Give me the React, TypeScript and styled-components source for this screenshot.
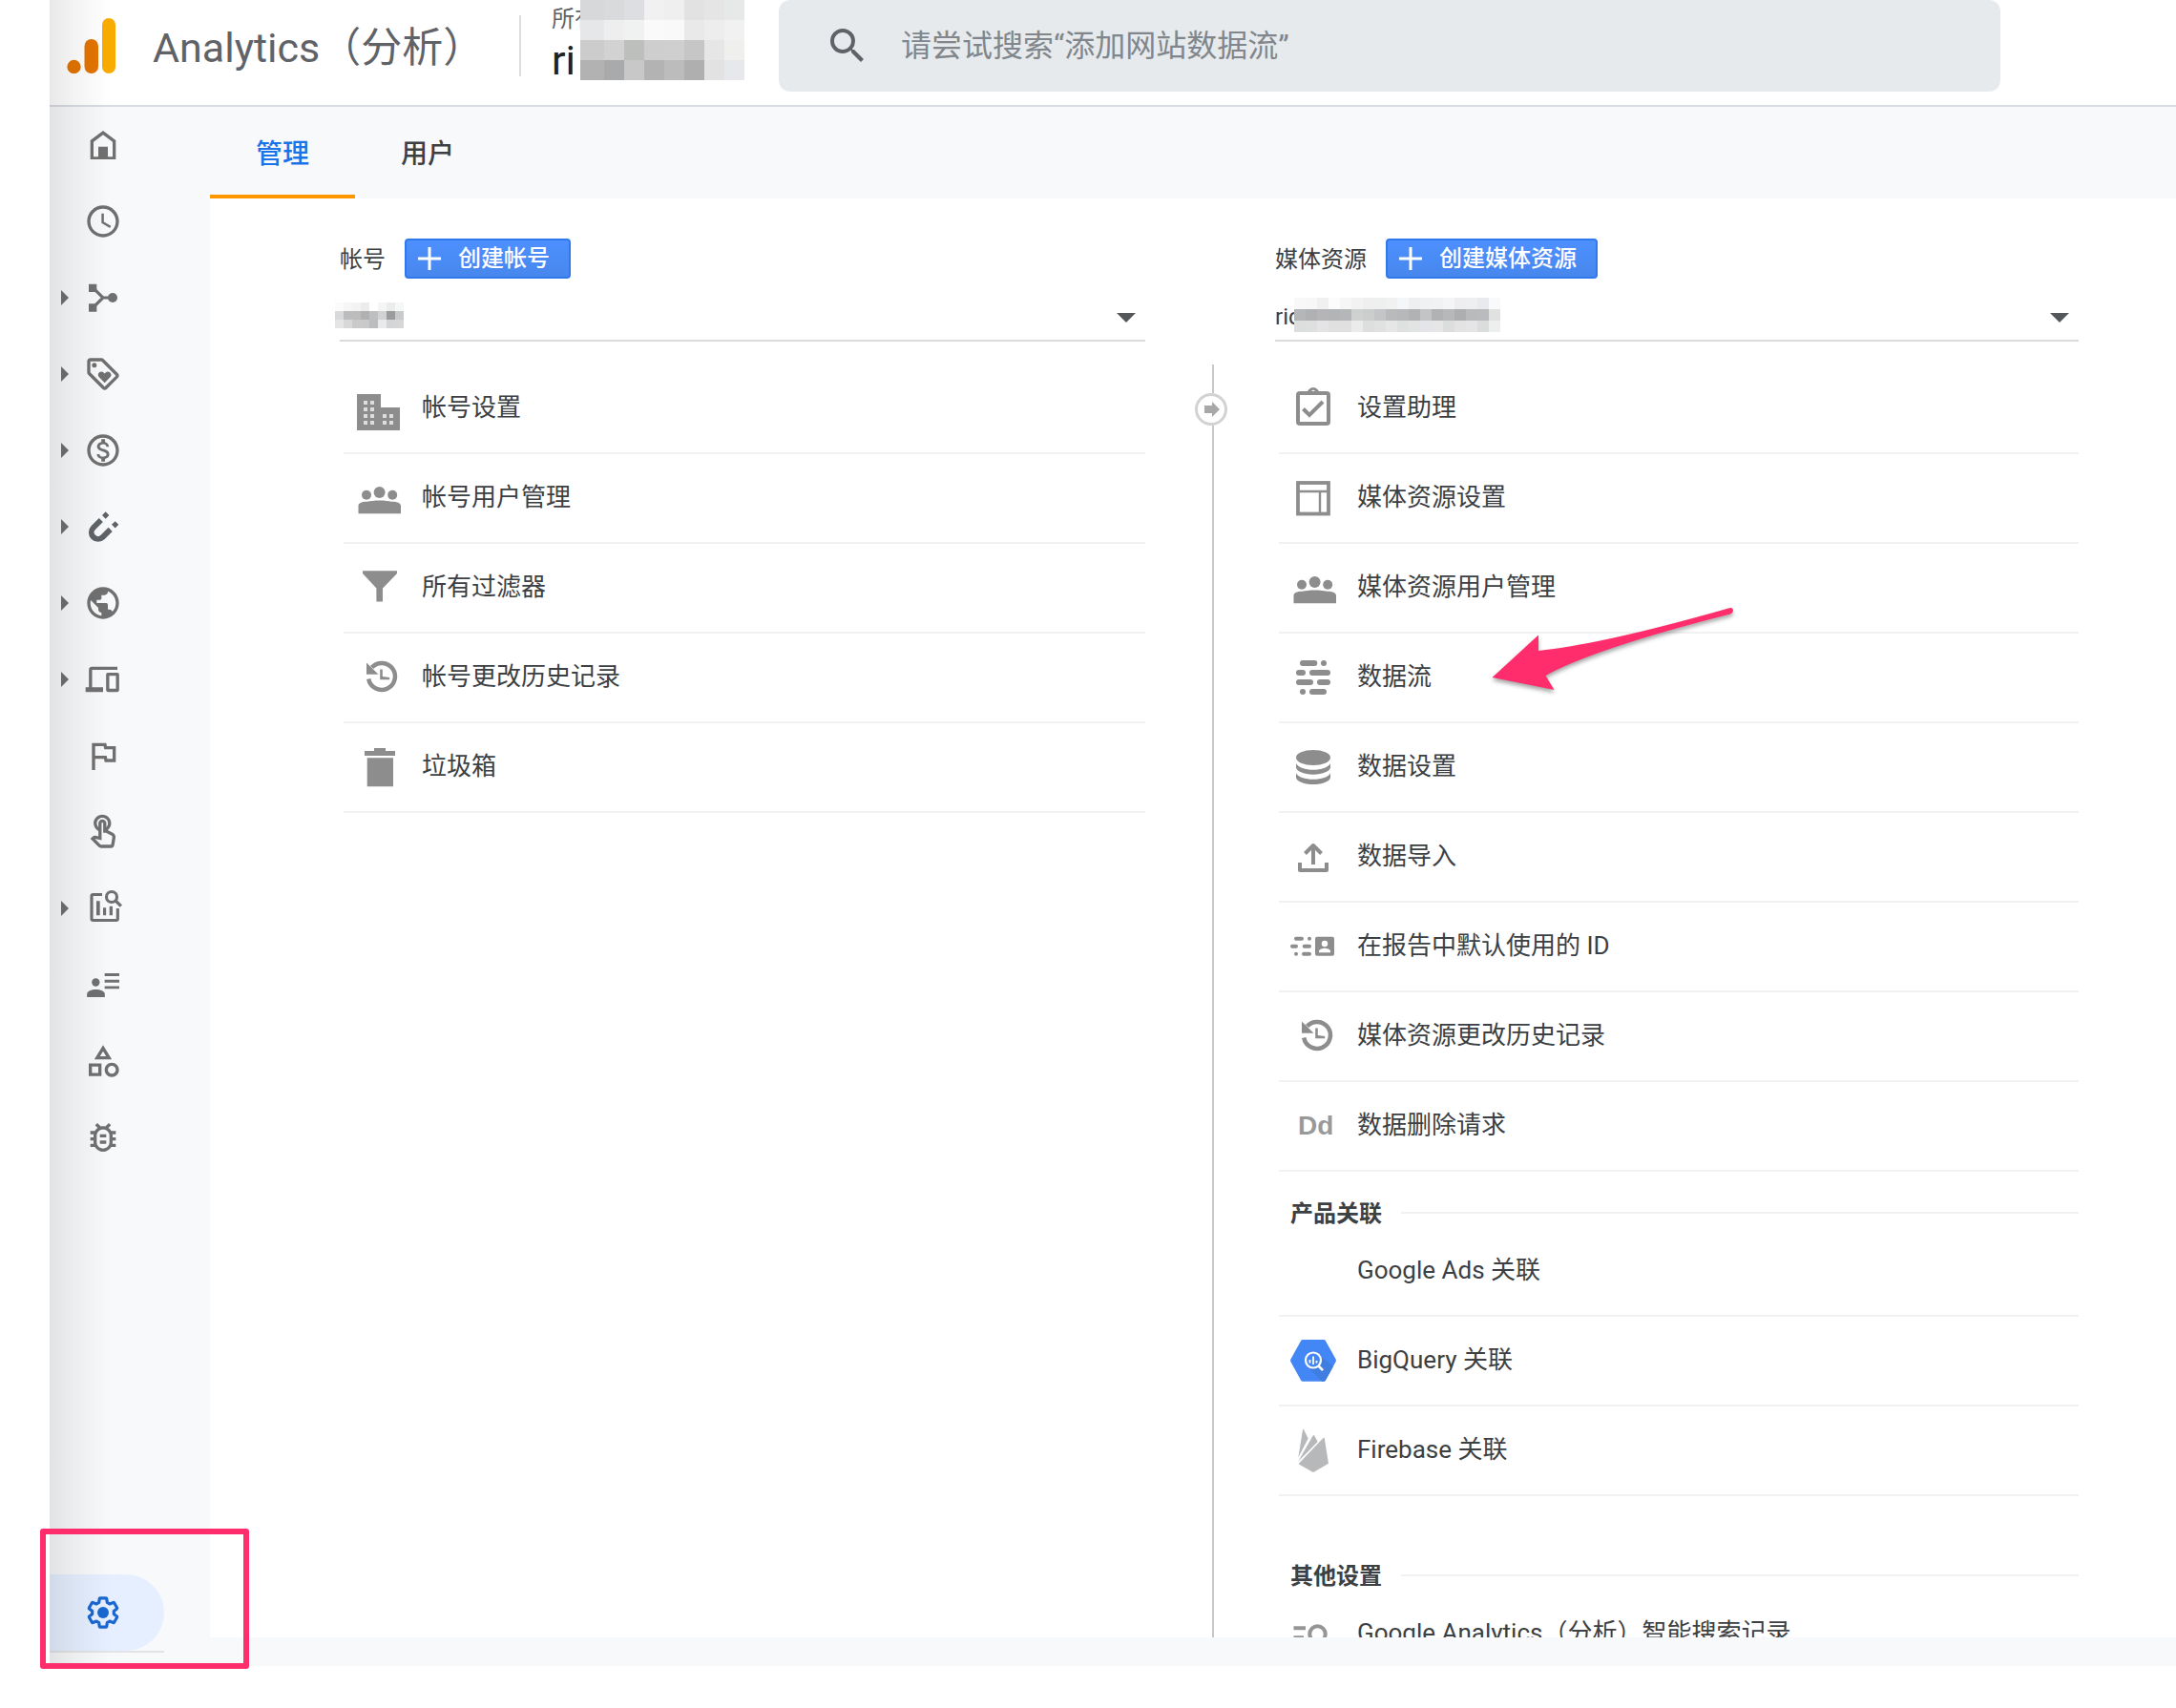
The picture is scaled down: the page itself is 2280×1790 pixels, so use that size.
import React from "react";
import styled, { createGlobalStyle } from "styled-components";
import {
  MdSchedule,
  MdOutlineLoyalty,
  MdOutlineMonetizationOn,
  MdPublic,
  MdOutlineFlag,
  MdOutlineTouchApp,
  MdOutlineCategory,
  MdOutlineBugReport,
  MdSearch,
} from "react-icons/md";

const color = {
  text: "#3c4043",
  muted: "#5f6368",
  nav: "#707070",
  icon: "#8d8d8d",
  surface: "#f8f9fb",
  rule: "#f1f1f1",
  accent: "#ff2d6b",
};

const GlobalStyle = createGlobalStyle`
  *, *::before, *::after { box-sizing: border-box; }
  body {
    margin: 0;
    background: #fff;
    color: ${color.text};
    font-family: Roboto, "Noto Sans CJK SC", sans-serif;
    font-size: 24px;
  }
  button, input, select { font-family: inherit; }
`;

const Page = styled.div`
  height: 100vh;
  padding: 0 0 44px 52px;
`;

const Frame = styled.div`
  position: relative;
  display: flex;
  flex-direction: column;
  height: 100%;
  background: ${color.surface};
`;

/* Soft shade along the left edge of the app */
const EdgeShade = styled.div`
  position: absolute;
  inset: 0 auto 0 0;
  width: 64px;
  background: linear-gradient(to right, rgba(0, 0, 0, 0.09), rgba(0, 0, 0, 0.05) 35%, rgba(0, 0, 0, 0));
  pointer-events: none;
`;

const Header = styled.header`
  flex: none;
  height: 112px;
  padding-left: 18px;
  border-bottom: 2px solid #d9dce1;
  background: #fff;
`;

const HeaderRow = styled.div`
  display: flex;
  align-items: center;
  height: 96px;
`;

const Title = styled.h1`
  flex: none;
  min-width: 384px;
  margin: 0 0 0 38px;
  padding-top: 4px;
  color: ${color.muted};
  font-size: 43px;
  font-weight: 400;
  line-height: 56px;
  white-space: nowrap;
`;

const HeaderRule = styled.div`
  flex: none;
  width: 2px;
  height: 64px;
  background: #dadce0;
`;

const AccountPicker = styled.button`
  position: relative;
  align-self: flex-start;
  flex: none;
  width: 238px;
  margin-left: 32px;
  padding: 6px 0 0;
  border: 0;
  background: none;
  text-align: left;
`;

const PickerScope = styled.span`
  display: block;
  color: ${color.muted};
  font-size: 24px;
  line-height: 28px;
`;

const PickerName = styled.span`
  display: block;
  color: #202124;
  font-size: 43px;
  line-height: 58px;
`;

const Mosaic = styled.span<{ $x: number; $y: number; $cell: number; $cols: number; $lead: number }>`
  position: absolute;
  left: ${(p) => p.$x}px;
  top: ${(p) => p.$y}px;
  display: grid;
  grid-template-columns: ${(p) => p.$cell + p.$lead}px repeat(${(p) => p.$cols - 1}, ${(p) => p.$cell}px);
  grid-auto-rows: ${(p) => p.$cell}px;
  pointer-events: none;
`;

const Cell = styled.span<{ $tone: string }>`
  background: #${(p) => p.$tone};
`;

const SearchBox = styled.label`
  display: flex;
  flex: 1;
  align-items: center;
  gap: 32px;
  height: 96px;
  margin-right: 184px;
  padding-left: 48px;
  border-radius: 12px;
  background: #e6eaec;
  color: ${color.muted};
`;

const SearchInput = styled.input`
  flex: 1;
  min-width: 0;
  padding: 0;
  border: 0;
  outline: 0;
  background: none;
  color: ${color.text};
  font-size: 32px;
  line-height: 48px;
  &::placeholder { color: #80868b; opacity: 1; }
`;

const Body = styled.div`
  display: flex;
  flex: 1;
  min-height: 0;
`;

const Sidebar = styled.nav`
  display: flex;
  flex: none;
  flex-direction: column;
  width: 168px;
  padding-bottom: 14px;
`;

const NavItem = styled.a<{ $active?: boolean }>`
  display: flex;
  flex: none;
  align-items: center;
  gap: 16px;
  width: 120px;
  height: 80px;
  padding-left: 12px;
  border-radius: 0 40px 40px 0;
  background: ${(p) => (p.$active ? "#e5efff" : "transparent")};
  color: ${(p) => (p.$active ? "#1967d2" : color.nav)};
`;

const NavFooter = styled.div`
  width: 120px;
  margin-top: auto;
  border-bottom: 2px solid #e2e3e5;
`;

const Caret = styled.span<{ $shown?: boolean }>`
  width: 8px;
  height: 16px;
  background: ${(p) => (p.$shown ? color.nav : "transparent")};
  clip-path: polygon(0 0, 100% 50%, 0 100%);
`;

const Main = styled.main`
  display: flex;
  flex: 1;
  flex-direction: column;
  min-width: 0;
  padding-bottom: 30px;
`;

const Tabs = styled.div`
  display: flex;
  flex: none;
  height: 96px;
`;

const Tab = styled.button<{ $active?: boolean }>`
  padding: 2px 48px 0;
  border: 0;
  border-bottom: 4px solid ${(p) => (p.$active ? "#ff9800" : "transparent")};
  background: none;
  color: ${(p) => (p.$active ? "#1a73e8" : color.text)};
  font-size: 28px;
  font-weight: 500;
`;

const Panel = styled.div`
  display: grid;
  flex: 1;
  grid-template-columns: minmax(0, 844fr) 136px minmax(0, 842fr);
  min-height: 0;
  padding: 42px 102px 0 136px;
  overflow: hidden;
  background: #fff;
`;

const Column = styled.section`
  min-width: 0;
`;

const ColumnHead = styled.div`
  display: flex;
  align-items: center;
  gap: 20px;
  height: 42px;
`;

const ColumnLabel = styled.label`
  padding-top: 2px;
  font-size: 24px;
  line-height: 32px;
`;

const CreateButton = styled.button`
  display: flex;
  align-items: center;
  gap: 18px;
  height: 42px;
  padding: 0 20px 0 12px;
  border: 2px solid #3079ed;
  border-radius: 4px;
  background: linear-gradient(#4d90fe, #4787ed);
  color: #fff;
  font-size: 24px;
  font-weight: 500;
  line-height: 32px;
`;

const SelectWrap = styled.div`
  position: relative;
  display: flex;
  align-items: center;
  height: 66px;
  padding: 16px 10px 0 0;
  border-bottom: 2px solid #dadada;
`;

const Select = styled.select`
  flex: 1;
  height: 48px;
  padding: 0;
  border: 0;
  outline: 0;
  background: none;
  color: ${color.text};
  font-size: 24px;
  appearance: none;
`;

const SelectArrow = styled.span`
  width: 20px;
  height: 10px;
  margin-top: 2px;
  background: #54585b;
  clip-path: polygon(0 0, 100% 0, 50% 100%);
`;

const List = styled.ul`
  margin: 0;
  padding: 0 0 0 4px;
  list-style: none;
`;

const FirstList = styled(List)`
  margin-top: 24px;
`;

const ListItem = styled.li`
  position: relative;
`;

const ItemLink = styled.a`
  display: flex;
  align-items: center;
  gap: 22px;
  height: 94px;
  padding-left: 12px;
  border-bottom: 2px solid ${color.rule};
  color: ${color.text};
  font-size: 26px;
  line-height: 40px;
  text-decoration: none;
  white-space: nowrap;
`;

const ItemLabel = styled.span`
  padding-bottom: 2px;
`;

const IconSlot = styled.span`
  display: flex;
  flex: none;
  width: 48px;
  height: 48px;
  color: ${color.icon};
`;

const GroupTitle = styled.h2<{ $spaced?: boolean }>`
  display: flex;
  align-items: center;
  gap: 20px;
  margin: ${(p) => (p.$spaced ? 40 : 0)}px 0 0;
  padding: 28px 0 0 16px;
  font-size: 24px;
  font-weight: 700;
  line-height: 30px;
  &::after {
    content: "";
    flex: 1;
    height: 2px;
    background: ${color.rule};
  }
`;

const GroupLabel = styled.span`
  height: 30px;
  line-height: 32px;
`;

const Divider = styled.div`
  display: flex;
  flex-direction: column;
  align-items: center;
  margin: 132px 0 0 6px;
  &::before {
    content: "";
    flex: none;
    width: 2px;
    height: 30px;
    background: #c8c8c8;
  }
  &::after {
    content: "";
    flex: 1;
    width: 2px;
    background: #c8c8c8;
  }
`;

const BadgeSvg = styled.svg`
  flex: none;
  margin-right: 4px;
`;

const Pointer = styled.svg`
  position: absolute;
  left: 222px;
  top: -30px;
  filter: drop-shadow(0 3px 2px rgba(0, 0, 0, 0.35));
  pointer-events: none;
`;

const Highlight = styled.div`
  position: absolute;
  left: -10px;
  bottom: -3px;
  width: 219px;
  height: 147px;
  border: 6px solid ${color.accent};
  border-radius: 3px;
  pointer-events: none;
`;

/* ---------- icons ---------- */

const Nav24 = ({ children }: { children: React.ReactNode }) => (
  <svg width="40" height="40" viewBox="0 0 24 24" fill="currentColor" aria-hidden="true">
    {children}
  </svg>
);

const Box48 = ({ children }: { children: React.ReactNode }) => (
  <svg width="48" height="48" viewBox="0 0 48 48" fill="currentColor" aria-hidden="true">
    {children}
  </svg>
);

const HomeIcon = () => (
  <Nav24>
    <path fillRule="evenodd" d="M12 3 4 9v12h16V9zM18 19.4h-3V13H9v6.4H6V10l6-4.5 6 4.5z" />
  </Nav24>
);

const LifecycleIcon = () => (
  <Nav24>
    <path d="M3 3.4h5v5H3zM3 15.8h5v5H3z" />
    <circle cx="18" cy="12" r="3" />
    <path d="M5.5 5.6 12 12l-6.5 6.4M12 12h6" fill="none" stroke="currentColor" strokeWidth="1.9" />
  </Nav24>
);

const MagnetIcon = () => (
  <Nav24>
    <g fill="#5f6368">
      <path d="m13.6 2.6 2.2 2.2-2.2 2.2-2.2-2.2zM19.6 8.5l2.2 2.2-2.2 2.2-2.2-2.2z" />
      <path d="M10.7 7.8 5.9 12.6a4.17 4.17 0 0 0 5.9 5.9l4.8-4.8" fill="none" stroke="#5f6368" strokeWidth="3.5" />
    </g>
  </Nav24>
);

const DevicesIcon = () => (
  <Nav24>
    <path d="M3.100 17V6q0-1.900 1.900-1.900h16V6H5.100v11H12v2.900H1V17z" />
    <path fillRule="evenodd" d="M15 7.800h6q1.100 0 1.100 1.100v9.900q0 1.100-1.100 1.100h-6q-1.100 0-1.100-1.100V8.900q0-1.100 1.100-1.100zM15.900 9.800v8.100h4.200V9.800z" />
  </Nav24>
);

const ExploreIcon = () => (
  <Nav24>
    <path d="M11.4 3.3H5.8a1 1 0 0 0-1 1v14.2a1 1 0 0 0 1 1h14.4a1 1 0 0 0 1-1V12" fill="none" stroke="currentColor" strokeWidth="1.9" />
    <path d="M7.8 7.4H10v9H7.8zM12 11.5h1.9v4.9H12zM16 10.6h2v5.8h-2z" />
    <circle cx="17.4" cy="4.8" r="3.3" fill="none" stroke="currentColor" strokeWidth="1.9" />
    <path d="m19.7 7 3.6 3.6" stroke="currentColor" strokeWidth="2" />
  </Nav24>
);

const AudienceIcon = () => (
  <Nav24>
    <circle cx="7.4" cy="10.5" r="2.5" />
    <path d="M1.9 19.8v-1.9c0-1.9 2.8-2.9 5.6-2.9s5.6 1 5.6 2.9v1.9z" />
    <path d="M13 4.8h9.2v1.8H13zM13 8.9h9.2v1.7H13zM13 12.9h9.2v1.7H13z" />
  </Nav24>
);

const GearIcon = () => (
  <Nav24>
    <path
      transform="translate(1.1 1.1) scale(.908)"
      fill="none"
      stroke="currentColor"
      strokeWidth="2.1"
      strokeLinejoin="round"
      d="M19.43 12.98c.04-.32.07-.64.07-.98 0-.34-.03-.66-.07-.98l2.11-1.65c.19-.15.24-.42.12-.64l-2-3.46a.5.5 0 0 0-.61-.22l-2.49 1c-.52-.4-1.08-.73-1.69-.98l-.38-2.65A.488.488 0 0 0 14 2h-4c-.25 0-.46.18-.49.42l-.38 2.65c-.61.25-1.17.59-1.69.98l-2.49-1a.5.5 0 0 0-.61.22l-2 3.46c-.13.22-.07.49.12.64l2.11 1.65c-.04.32-.07.65-.07.98 0 .33.03.66.07.98l-2.11 1.65c-.19.15-.24.42-.12.64l2 3.46a.5.5 0 0 0 .61.22l2.49-1c.52.4 1.08.73 1.69.98l.38 2.65c.03.24.24.42.49.42h4c.25 0 .46-.18.49-.42l.38-2.65c.61-.25 1.17-.59 1.69-.98l2.49 1a.5.5 0 0 0 .61-.22l2-3.46c.12-.22.07-.49-.12-.64z"
    />
    <circle cx="12" cy="12" r="3.6" />
  </Nav24>
);

const BuildingIcon = () => (
  <Box48>
    <path d="M2 9h25v14h20v24H2z" />
    <g fill="#fff" opacity=".7">
      {[17, 24, 31, 38].map((y) => (
        <path key={y} d={`M9 ${y - 1}h4v4H9zM16 ${y - 1}h4v4h-4z`} />
      ))}
      <path d="M29 30h4v4h-4zM36 30h4v4h-4zM29 37h4v4h-4zM36 37h4v4h-4z" />
    </g>
  </Box48>
);

const PeopleIcon = () => (
  <Box48>
    <circle cx="25.6" cy="18" r="6" />
    <circle cx="12" cy="20.7" r="5" />
    <circle cx="39.2" cy="20.7" r="5" />
    <path d="M3.5 40.3V32c0-3 5-4.6 9.500-4.2 3-.7 7-1.300 12.600-1.300s9.600.6 12.600 1.300c4.500-.4 9.800 1.200 9.800 4.200v8.300z" />
  </Box48>
);

const FilterIcon = () => (
  <Box48>
    <path d="M8 6.300h36V9L29 24.500v14h-6.600v-14L8 9z" />
  </Box48>
);

const HistoryIcon = () => (
  <Box48>
    <path d="M14.200 25.500a14 14 0 1 0 3.400-12" fill="none" stroke="currentColor" strokeWidth="4.500" />
    <path d="M12 8.500v12.300h12.500z" />
    <path d="M26.200 15.500h2.600v7.600l7.400 1v2.200h-10z" />
  </Box48>
);

const TrashIcon = () => (
  <Box48>
    <path d="M20 4h12v3h10v5H10V7h10zM12.700 14.300h27.300v30H12.700z" />
  </Box48>
);

const AssistantIcon = () => (
  <Box48>
    <rect x="8" y="8" width="32" height="32" rx="2" fill="none" stroke="currentColor" strokeWidth="4" />
    <path fillRule="evenodd" d="M17 9c1-4 3.500-7 7-7s6 3 7 7zM24 4.800a2 2 0 1 0 0 4 2 2 0 0 0 0-4z" />
    <path d="m13.500 24.500 6.500 6.500 14-14" fill="none" stroke="currentColor" strokeWidth="4" />
  </Box48>
);

const LayoutIcon = () => (
  <Box48>
    <rect x="8" y="8" width="32" height="32.500" fill="none" stroke="currentColor" strokeWidth="3.800" />
    <path d="M8 17h32M31 17v23" fill="none" stroke="currentColor" strokeWidth="2.400" />
  </Box48>
);

const StreamsIcon = () => (
  <Box48>
    <path
      d="M13 9h12.300M35 9h.01M9 19h4M23 19h16M9 29h12M31 29h8M13 39h.01M23 39h12"
      fill="none"
      stroke="currentColor"
      strokeWidth="6"
      strokeLinecap="round"
    />
  </Box48>
);

const DatabaseIcon = () => (
  <Box48>
    <ellipse cx="24" cy="14" rx="18" ry="8" />
    <path d="M6 20c2 4.200 9.500 6.800 18 6.800S40 24.200 42 20v4c0 4-8 7.700-18 7.700S6 28 6 24z" />
    <path d="M6 30.200c2 4.200 9.500 6.500 18 6.500s16-2.300 18-6.500v4.200c0 4-8 7.600-18 7.600S6 38.400 6 34.400z" />
  </Box48>
);

const ImportIcon = () => (
  <Box48>
    <path d="M10 30v8h28v-8M24 32V12M15.500 20.500 24 12l8.500 8.500" fill="none" stroke="currentColor" strokeWidth="4" strokeLinejoin="round" />
  </Box48>
);

const IdentityIcon = () => (
  <Box48>
    <path
      d="M6 15.700h6M20 15.700h.01M2 23.700h4M14.700 23.700H20M6 31.700h.01M14 31.700h6"
      fill="none"
      stroke="currentColor"
      strokeWidth="4"
      strokeLinecap="round"
    />
    <rect x="26" y="13.700" width="20" height="20" rx="2" />
    <g fill="#fff">
      <circle cx="36" cy="21" r="3.200" />
      <path d="M30 30.300v-1.600c0-2 4-3 6-3s6 1 6 3v1.600z" />
    </g>
  </Box48>
);

const DdIcon = () => (
  <Box48>
    <text x="8" y="33" fontFamily="Liberation Sans, Arial, sans-serif" fontSize="28" fontWeight="700" fill="#999">
      Dd
    </text>
  </Box48>
);

const BigQueryIcon = () => (
  <Box48>
    <path d="M13 2h22q1.200 0 1.800 1l10.700 19.300q.8 1.500 0 3L36.800 44.700q-.6 1-1.800 1H13q-1.200 0-1.800-1L.5 25.300q-.8-1.500 0-3L11.200 3Q11.800 2 13 2z" fill="#4386f5" />
    <path d="m30 18 15 12-8.200 14.700q-.6 1-1.800 1h-2L18 30z" fill="#3f7de0" />
    <circle cx="24" cy="23.500" r="8" fill="#4386f5" stroke="#fff" strokeWidth="2.200" />
    <path d="m29.500 29.500 4.600 4.600" stroke="#fff" strokeWidth="2.600" />
    <path d="M20.500 23v3.500M24 19.500V28M27.500 24v2.500" stroke="#fff" strokeWidth="1.800" />
  </Box48>
);

const FirebaseIcon = () => (
  <Box48>
    <g fill="#b7b8ba">
      <path d="m8.500 38.200 26-27.200q1-.8 1.300.5L40 37.800 25 46.500q-1 .6-2 0z" />
      <path d="M8.300 31.500 13 2.600q.4-1.400 1.200-.2l4.500 9z" />
      <path d="m8.300 35.500 15.400-27q.8-1.200 1.500 0l3.500 6.500z" />
    </g>
  </Box48>
);

const SearchHistoryIcon = () => (
  <Box48>
    <g stroke="#959595" fill="none" strokeWidth="4">
      <path d="M3.500 18.300H16M3.500 28.300H14M3.500 38.300H24" />
      <circle cx="28.500" cy="24.500" r="8.200" />
      <path d="m34 31 7 7" />
    </g>
  </Box48>
);

const LogoIcon = () => (
  <svg width="52" height="58" viewBox="0 0 52 58" aria-hidden="true">
    <rect x="37" y="0" width="14" height="58" rx="7" fill="#f9ab00" />
    <rect x="18.500" y="22" width="14.500" height="36" rx="7.200" fill="#e37400" />
    <circle cx="7.500" cy="51" r="7.200" fill="#e37400" />
  </svg>
);

const PlusIcon = () => (
  <svg width="24" height="24" viewBox="0 0 24 24" aria-hidden="true">
    <path d="M12 0v24M0 12h24" stroke="#fff" strokeWidth="3" />
  </svg>
);

const LinkBadge = () => (
  <BadgeSvg width="34" height="34" viewBox="0 0 34 34" aria-hidden="true">
    <circle cx="17" cy="17" r="15.500" fill="#fff" stroke="#d2d2d2" strokeWidth="3" />
    <path d="M10 13h8V9l8 8-8 8v-4h-8z" fill="#a8a8a8" />
  </BadgeSvg>
);

/* ---------- data ---------- */

const navItems = [
  { label: "首页", icon: <HomeIcon />, expandable: false },
  { label: "实时", icon: <MdSchedule size={40} />, expandable: false },
  { label: "生命周期", icon: <LifecycleIcon />, expandable: true },
  { label: "互动度", icon: <MdOutlineLoyalty size={40} />, expandable: true },
  { label: "创收", icon: <MdOutlineMonetizationOn size={40} />, expandable: true },
  { label: "留存", icon: <MagnetIcon />, expandable: true },
  { label: "受众特征", icon: <MdPublic size={40} />, expandable: true },
  { label: "技术", icon: <DevicesIcon />, expandable: true },
  { label: "转化", icon: <MdOutlineFlag size={40} />, expandable: false },
  { label: "事件", icon: <MdOutlineTouchApp size={40} />, expandable: false },
  { label: "探索", icon: <ExploreIcon />, expandable: true },
  { label: "受众群体", icon: <AudienceIcon />, expandable: false },
  { label: "自定义", icon: <MdOutlineCategory size={40} />, expandable: false },
  { label: "调试", icon: <MdOutlineBugReport size={40} />, expandable: false },
];

type Entry = { label: string; icon?: React.ReactNode; pointed?: boolean };

const accountEntries: Entry[] = [
  { label: "帐号设置", icon: <BuildingIcon /> },
  { label: "帐号用户管理", icon: <PeopleIcon /> },
  { label: "所有过滤器", icon: <FilterIcon /> },
  { label: "帐号更改历史记录", icon: <HistoryIcon /> },
  { label: "垃圾箱", icon: <TrashIcon /> },
];

const propertyEntries: Entry[] = [
  { label: "设置助理", icon: <AssistantIcon /> },
  { label: "媒体资源设置", icon: <LayoutIcon /> },
  { label: "媒体资源用户管理", icon: <PeopleIcon /> },
  { label: "数据流", icon: <StreamsIcon />, pointed: true },
  { label: "数据设置", icon: <DatabaseIcon /> },
  { label: "数据导入", icon: <ImportIcon /> },
  { label: "在报告中默认使用的 ID", icon: <IdentityIcon /> },
  { label: "媒体资源更改历史记录", icon: <HistoryIcon /> },
  { label: "数据删除请求", icon: <DdIcon /> },
];

const linkEntries: Entry[] = [
  { label: "Google Ads 关联" },
  { label: "BigQuery 关联", icon: <BigQueryIcon /> },
  { label: "Firebase 关联", icon: <FirebaseIcon /> },
];

const otherEntries: Entry[] = [{ label: "Google Analytics（分析）智能搜索记录", icon: <SearchHistoryIcon /> }];

const headerTones = [
  "d6d8da d9dadc dddee2 f1f1f1 efefef e2e2e2 e5e5e5 e7e8e8",
  "e6e7e9 eeeeef f0f1f1 f9faf9 f8f9f8 e9e9e9 ecedec f1f1f1",
  "cbcccb d2d2d2 bcbfbc cdcecd cfcfcf c5c6c5 e6e6e6 efefee",
  "b2b2b2 a9aaac c8c8c8 b3b3b3 bcbcbc afafaf e2e2e2 e7e8eb",
];

const accountTones = [
  "fbfbfb f6f6f6 f3f3f3 ececec ffffff f5f5f5 ebecec f6f8f7",
  "d8d9da bbbcbe bcbcbd b1b1b2 bebfc0 d1d2d2 9c9c9e c9cacb",
  "e5e5e5 d8d8d8 cacaca c8c9c9 bcbdbf e9eaea d4d5d6 d6d6d6",
];

const propertyTones = [
  "f8f8f8 f7f7f8 f0f0f0 fdfcfd f6f6f6 f2f2f3 efefef eeefef f1f1f2 f5f6f9 eeeff0 f0f1f2 f1f2f4 f4f5f7 eeeef0 eeeff1 e9eaed f8fafc",
  "b5b6b7 b0b1b3 b5b5b7 b3b4b5 b4b6b7 cfd0d0 cccdcd c4c5c6 b9babc b7b8ba b1b2b4 c3c4c6 b1b2b4 b7b8ba adaeb0 b9babc b9bbbd dfe2e1",
  "dcdfdd dedfdf e4e3e5 e0e0e0 e0e0e1 ebebeb dcdfdd e0e1e1 e6e6e7 dfe0e0 e2e4e4 e4e5e8 e6e6e6 dbdedc e3e3e3 e5e5e7 dbdddc edefee",
];

/* ---------- parts ---------- */

type RedactionProps = { tones: string[]; x: number; y: number; cell: number; lead?: number };

function Redaction({ tones, x, y, cell, lead = 0 }: RedactionProps) {
  const cells = tones.flatMap((row) => row.split(" "));
  return (
    <Mosaic $x={x} $y={y} $cell={cell} $lead={lead} $cols={cells.length / tones.length} aria-hidden="true">
      {cells.map((tone, i) => (
        <Cell key={i} $tone={tone} />
      ))}
    </Mosaic>
  );
}

function Entries({ items, as: Wrapper = List }: { items: Entry[]; as?: React.ElementType }) {
  return (
    <Wrapper>
      {items.map((item) => (
        <ListItem key={item.label}>
          <ItemLink href="#">
            <IconSlot>{item.icon}</IconSlot>
            <ItemLabel>{item.label}</ItemLabel>
          </ItemLink>
          {item.pointed && (
            <Pointer width="258" height="96" viewBox="0 0 258 96" aria-hidden="true">
              <path
                d="M1.500 76 50 31.500V48Q118 41 250 3.200q3.500-.5 4 2.300.2 2.500-3 4Q108 46 57.500 74L66.500 89z"
                fill={color.accent}
              />
            </Pointer>
          )}
        </ListItem>
      ))}
    </Wrapper>
  );
}

export default function App() {
  return (
    <Page>
      <GlobalStyle />
      <Frame>
        <Header>
          <HeaderRow>
            <LogoIcon />
            <Title>Analytics（分析）</Title>
            <HeaderRule />
            <AccountPicker type="button">
              <PickerScope>所有</PickerScope>
              <PickerName>ri</PickerName>
              <Redaction tones={headerTones} x={30} y={0} cell={21} lead={4} />
            </AccountPicker>
            <SearchBox>
              <MdSearch size={48} />
              <SearchInput type="text" aria-label="搜索" placeholder="请尝试搜索“添加网站数据流”" />
            </SearchBox>
          </HeaderRow>
        </Header>

        <Body>
          <Sidebar aria-label="主导航">
            {navItems.map((item) => (
              <NavItem key={item.label} href="#" aria-label={item.label}>
                <Caret $shown={item.expandable} />
                {item.icon}
              </NavItem>
            ))}
            <NavFooter>
              <NavItem href="#" aria-label="管理" $active>
                <Caret />
                <GearIcon />
              </NavItem>
            </NavFooter>
          </Sidebar>

          <Main>
            <Tabs role="tablist">
              <Tab type="button" role="tab" aria-selected="true" $active>
                管理
              </Tab>
              <Tab type="button" role="tab" aria-selected="false">
                用户
              </Tab>
            </Tabs>

            <Panel>
              <Column>
                <ColumnHead>
                  <ColumnLabel htmlFor="account">帐号</ColumnLabel>
                  <CreateButton type="button">
                    <PlusIcon />
                    创建帐号
                  </CreateButton>
                </ColumnHead>
                <SelectWrap>
                  <Select id="account">
                    <option></option>
                  </Select>
                  <SelectArrow />
                  <Redaction tones={accountTones} x={-5} y={25} cell={9} />
                </SelectWrap>
                <Entries items={accountEntries} as={FirstList} />
              </Column>

              <Divider>
                <LinkBadge />
              </Divider>

              <Column>
                <ColumnHead>
                  <ColumnLabel htmlFor="property">媒体资源</ColumnLabel>
                  <CreateButton type="button">
                    <PlusIcon />
                    创建媒体资源
                  </CreateButton>
                </ColumnHead>
                <SelectWrap>
                  <Select id="property">
                    <option>ric</option>
                  </Select>
                  <SelectArrow />
                  <Redaction tones={propertyTones} x={20} y={20} cell={12} />
                </SelectWrap>
                <Entries items={propertyEntries} as={FirstList} />
                <GroupTitle>
                  <GroupLabel>产品关联</GroupLabel>
                </GroupTitle>
                <Entries items={linkEntries} />
                <GroupTitle $spaced>
                  <GroupLabel>其他设置</GroupLabel>
                </GroupTitle>
                <Entries items={otherEntries} />
              </Column>
            </Panel>
          </Main>
        </Body>

        <EdgeShade />
        <Highlight />
      </Frame>
    </Page>
  );
}
